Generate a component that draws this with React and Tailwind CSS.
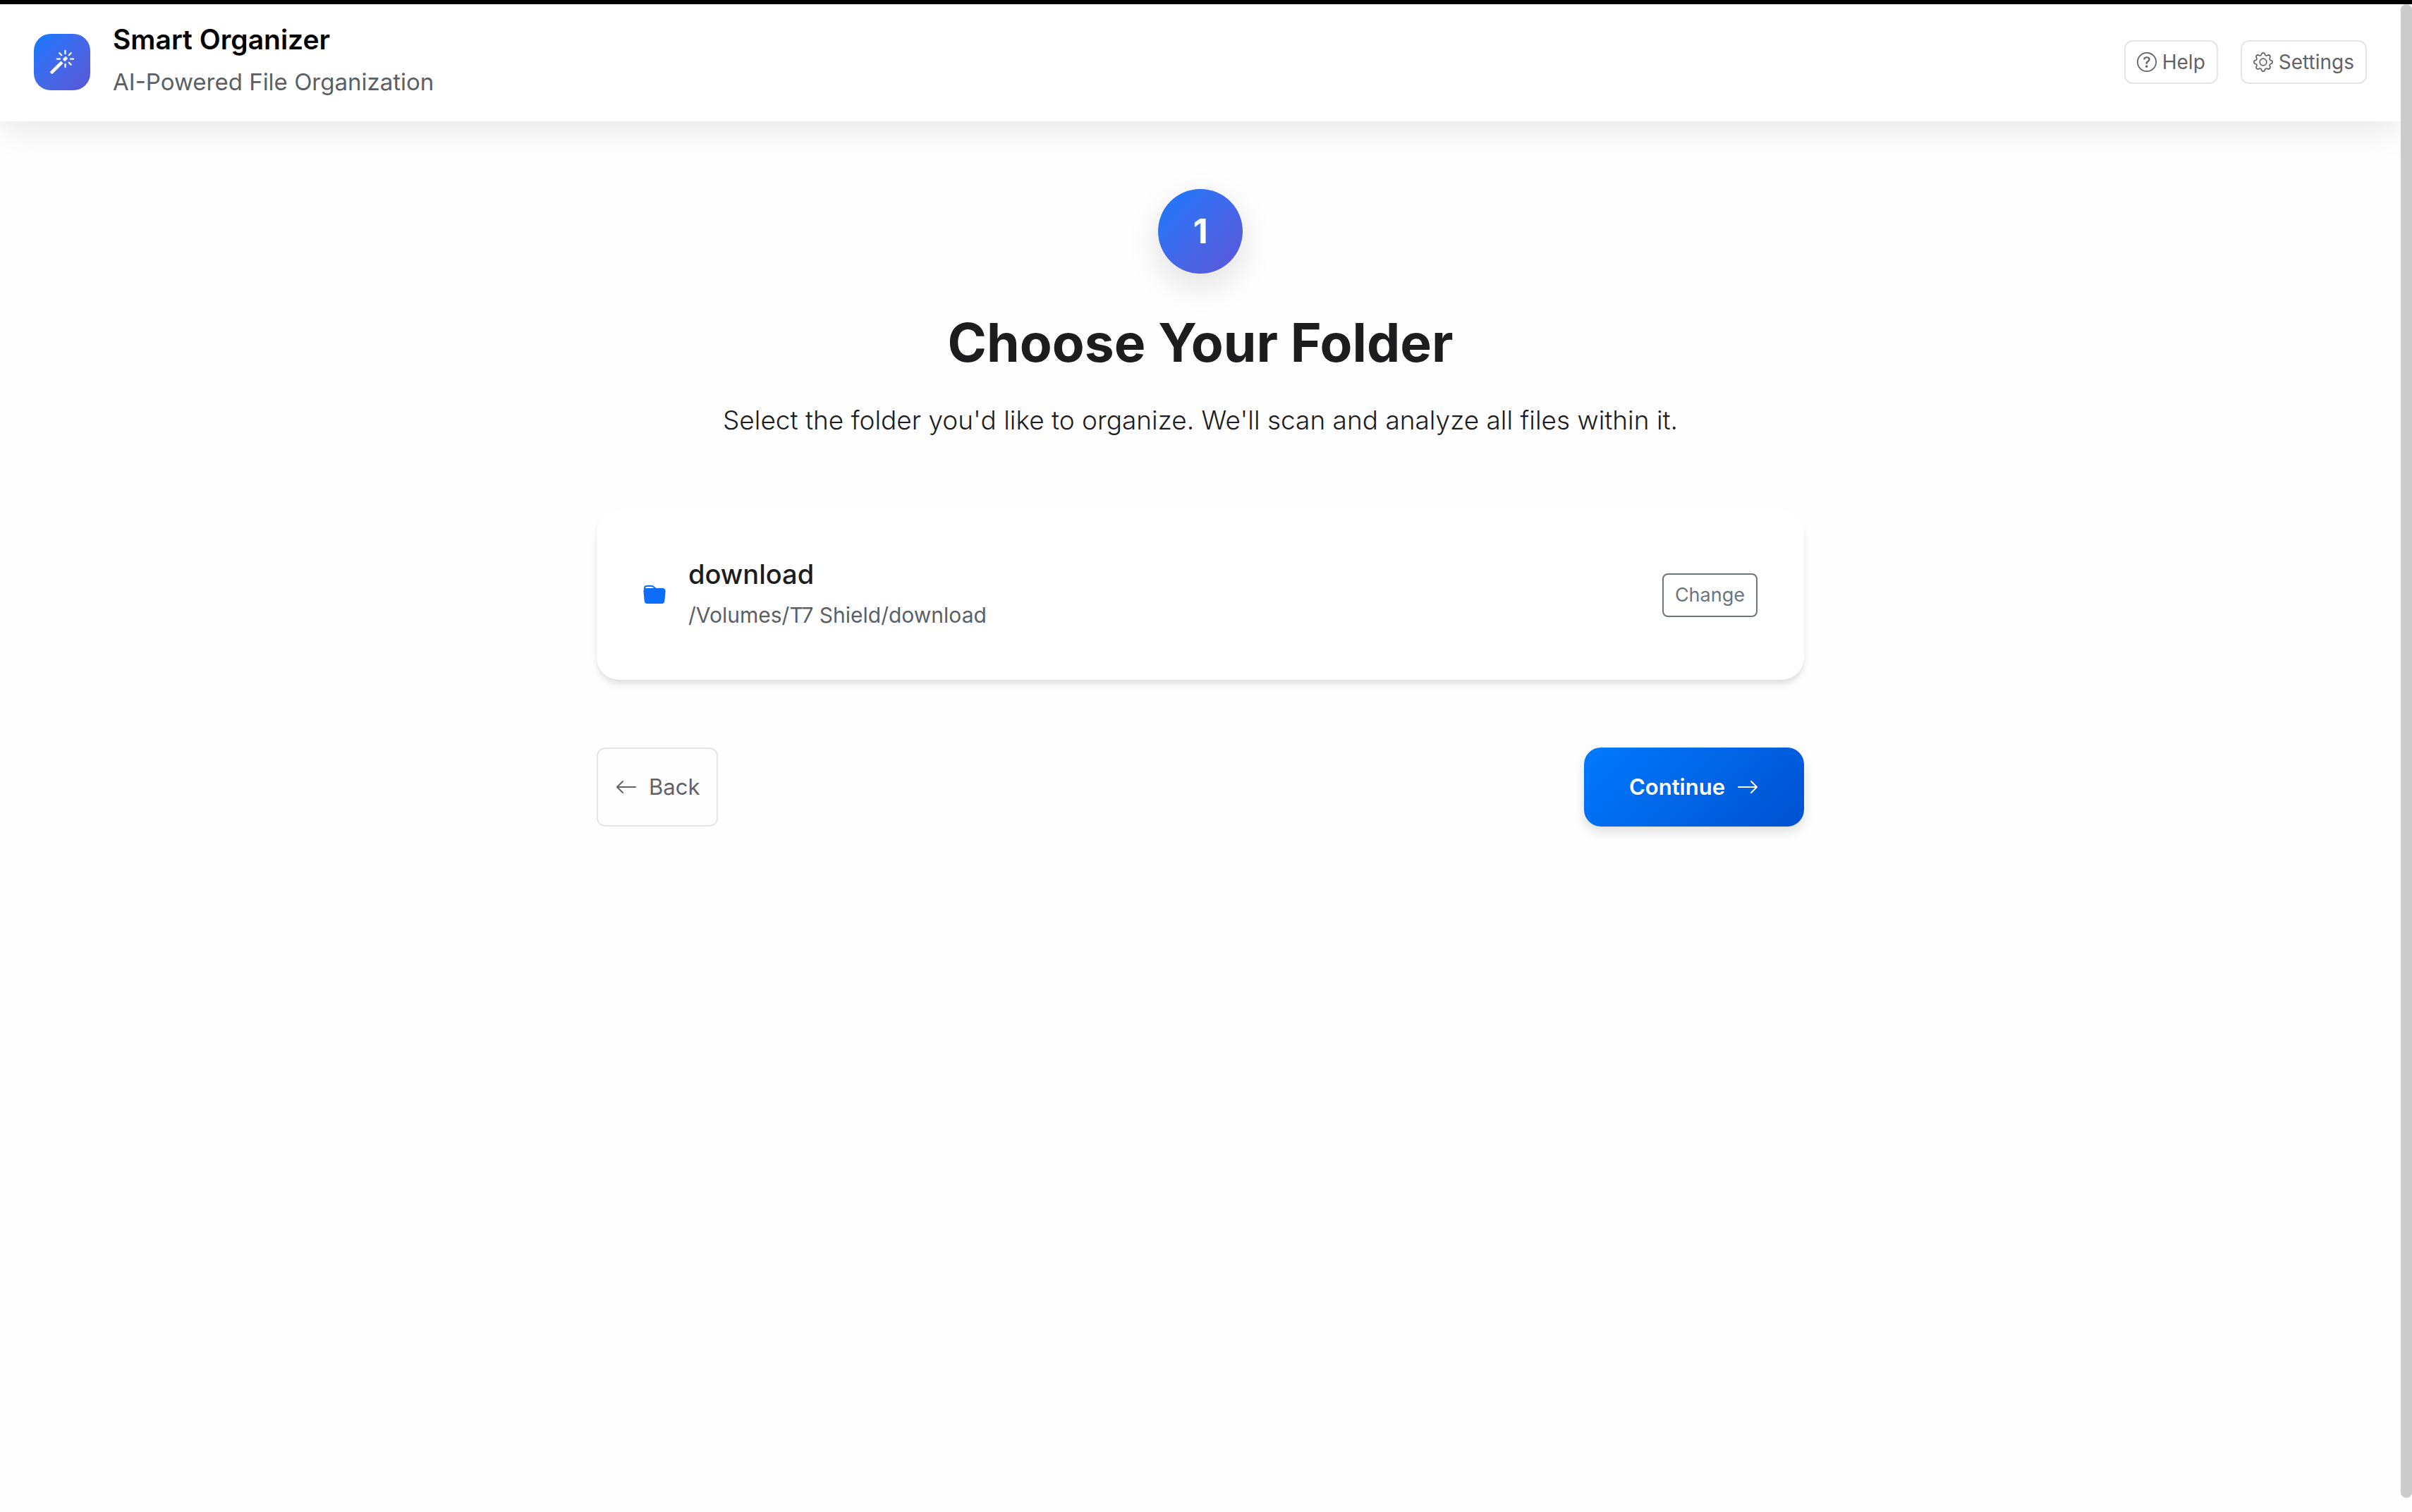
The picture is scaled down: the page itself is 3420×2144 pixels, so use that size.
import {
  BsArrowLeft,
  BsArrowRight,
  BsFolderFill,
  BsGear,
  BsMagic,
  BsQuestionCircle,
} from "react-icons/bs";

function ToolbarButton({ icon: Icon, children }) {
  return (
    <button
      type="button"
      className="flex items-center gap-2 rounded-xl border-2 border-[#e5e5e5] px-4 py-2 text-[28px] leading-[42px] text-[#636366]"
    >
      <Icon className="size-7" aria-hidden="true" />
      {children}
    </button>
  );
}

function Header() {
  return (
    <header className="flex items-center justify-between border-b-2 border-white bg-white px-12 py-7 shadow-[0_8px_48px_rgba(0,0,0,0.1)]">
      <div className="flex items-center gap-8">
        <div className="flex size-20 items-center justify-center rounded-3xl bg-linear-135 from-[#007aff] to-[#5856d6] text-white">
          <BsMagic className="size-9" aria-hidden="true" />
        </div>
        <div>
          <h1 className="text-[39px] leading-11 font-semibold text-black">Smart Organizer</h1>
          <p className="mt-3 text-[33px] leading-[52px] text-[#5b6065]">AI-Powered File Organization</p>
        </div>
      </div>
      <nav className="flex items-center gap-8" aria-label="Application">
        <ToolbarButton icon={BsQuestionCircle}>Help</ToolbarButton>
        <ToolbarButton icon={BsGear}>Settings</ToolbarButton>
      </nav>
    </header>
  );
}

function FolderCard() {
  return (
    <section className="flex items-center gap-8 rounded-4xl border-2 border-transparent bg-white p-16 shadow-[0_8px_12px_-2px_rgba(0,0,0,0.1),0_4px_8px_-2px_rgba(0,0,0,0.06)]">
      <BsFolderFill className="size-8 shrink-0 text-[#0d6efd]" aria-hidden="true" />
      <div className="flex-1">
        <h3 className="text-[38px] leading-12 font-medium text-[#1d1d1f]">download</h3>
        <p className="mt-2 text-[30px] leading-[52px] text-[#5b6065]">/Volumes/T7 Shield/download</p>
      </div>
      <button
        type="button"
        className="rounded-lg border-2 border-[#6c757d] px-4 py-2 text-[27px] leading-[42px] text-[#6c757d]"
      >
        Change
      </button>
    </section>
  );
}

export default function App() {
  return (
    <div className="flex min-h-screen border-t-6 border-black bg-[#fefefe] font-['Inter',sans-serif]">
      <div className="min-w-0 flex-1 overflow-hidden">
        <Header />
        <main className="mx-auto max-w-[1712px] pt-24">
          <div className="flex flex-col items-center text-center text-[#1d1d1f]">
            <div className="flex size-30 items-center justify-center rounded-full bg-linear-135 from-[#007aff] to-[#5856d6] text-5xl font-bold text-white shadow-[0_16px_48px_rgba(0,0,0,0.12)]">
              1
            </div>
            <h2 className="mt-[50px] text-[75px] leading-24 font-bold">Choose Your Folder</h2>
            <p className="mt-8 text-[37px] leading-[60px] font-light">
              Select the folder you'd like to organize. We'll scan and analyze all files within it.
            </p>
          </div>
          <div className="mt-[98px]">
            <FolderCard />
          </div>
          <div className="mt-24 flex items-stretch justify-between">
            <button
              type="button"
              className="flex items-center gap-4 rounded-xl border-2 border-[#e5e5e5] px-6 text-[31px] leading-12 text-[#636366]"
            >
              <BsArrowLeft className="size-8" aria-hidden="true" />
              Back
            </button>
            <button
              type="button"
              className="flex items-center gap-4 rounded-3xl bg-linear-135 from-[#007aff] to-[#0051d0] px-16 py-8 text-[31px] leading-12 font-semibold text-white shadow-[0_8px_16px_rgba(0,0,0,0.12)]"
            >
              Continue
              <BsArrowRight className="size-8" aria-hidden="true" />
            </button>
          </div>
        </main>
      </div>
      <div className="mb-5 w-4 shrink-0 rounded-full bg-[#cbcbcb]" aria-hidden="true" />
    </div>
  );
}
